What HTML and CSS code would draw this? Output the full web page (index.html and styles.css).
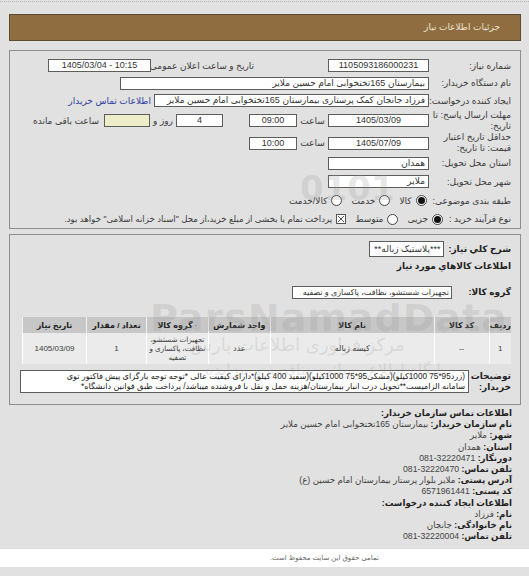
FILE: index.html
```html
<!DOCTYPE html>
<html lang="fa" dir="rtl">
<head>
<meta charset="utf-8">
<title>جزئیات اطلاعات نیاز</title>
<link rel="stylesheet" href="styles.css">
</head>
<body>
<div class="topline"></div>
<div class="page">
  <div class="header">جزئیات اطلاعات نیاز</div>

  <div class="box box1">
    <div class="row r1">
      <div class="lbl">شماره نیاز:</div>
      <div class="inp w101 c">1105093186000231</div>
      <div class="lbl2">تاریخ و ساعت اعلان عمومی:</div>
      <div class="inp w103 c"><span dir="ltr">1405/03/04 - 10:15</span></div>
    </div>
    <div class="row r2">
      <div class="lbl">نام دستگاه خریدار:</div>
      <div class="inp w309">بیمارستان 165تختخوابی امام حسین ملایر</div>
    </div>
    <div class="row r3">
      <div class="lbl">ایجاد کننده درخواست:</div>
      <div class="inp w275">فرزاد جانجان کمک پرستاری بیمارستان 165تختخوابی امام حسین ملایر</div>
      <a class="link" href="#">اطلاعات تماس خریدار</a>
    </div>
    <div class="row r4">
      <div class="lbl two">مهلت ارسال پاسخ: تا<br>تاریخ:</div>
      <div class="inp w101 c">1405/03/09</div>
      <div class="txt saat">ساعت</div>
      <div class="inp w48 c">09:00</div>
      <div class="inp w47 c gap26">4</div>
      <div class="txt rooz">روز و</div>
      <div class="inp w46 yellow"></div>
      <div class="txt baghi">ساعت باقی مانده</div>
    </div>
    <div class="row r5">
      <div class="lbl two">حداقل تاریخ اعتبار<br>قیمت: تا تاریخ:</div>
      <div class="inp w101 c">1405/07/09</div>
      <div class="txt saat">ساعت</div>
      <div class="inp w48 c">10:00</div>
    </div>
    <div class="row r6">
      <div class="lbl">استان محل تحویل:</div>
      <div class="inp w101">همدان</div>
    </div>
    <div class="row r7">
      <div class="lbl">شهر محل تحویل:</div>
      <div class="inp w101">ملایر</div>
    </div>
    <div class="row r8">
      <div class="lbl auto">طبقه بندی موضوعی:</div>
      <span class="radio on"></span><span class="opt">کالا</span>
      <span class="radio"></span><span class="opt">خدمت</span>
      <span class="radio"></span><span class="opt">کالا/خدمت</span>
    </div>
    <div class="row r9">
      <div class="lbl auto">نوع فرآیند خرید :</div>
      <span class="radio on"></span><span class="opt">جزیی</span>
      <span class="radio"></span><span class="opt">متوسط</span>
      <svg class="chk" width="10" height="10" viewBox="0 0 10 10"><rect x="0.5" y="0.5" width="9" height="9" fill="#fff" stroke="#555"/><path d="M2 2 L8 8 M8 2 L2 8" stroke="#555" stroke-width="1"/></svg>
      <span class="opt note">پرداخت تمام یا بخشی از مبلغ خرید،از محل "اسناد خزانه اسلامی" خواهد بود.</span>
    </div>
  </div>

  <div class="box box2">
    <div class="row s1">
      <div class="blbl">شرح کلي نياز:</div>
      <div class="inp sharh">***پلاستیک زباله**</div>
    </div>
    <div class="row s2">
      <div class="blbl">اطلاعات كالاهاي مورد نياز</div>
    </div>
    <div class="row s3">
      <div class="blbl">گروه کالا:</div>
      <div class="inp group">تجهیزات شستشو، نظافت، پاکسازی و تصفیه</div>
    </div>
    <table class="items">
      <thead>
        <tr>
          <th class="col-n">ردیف</th>
          <th class="col-code">کد کالا</th>
          <th class="col-name">نام کالا</th>
          <th class="col-unit">واحد شمارش</th>
          <th class="col-grp"><span class="dot">·</span> گروه کالا</th>
          <th class="col-qty">تعداد / مقدار</th>
          <th class="col-date">تاریخ نیاز</th>
        </tr>
      </thead>
      <tbody>
        <tr>
          <td>1</td>
          <td>--</td>
          <td>کیسه زباله</td>
          <td>عدد</td>
          <td class="grp">تجهیزات شستشو،<br>نظافت، پاکسازی و<br>تصفیه</td>
          <td>1</td>
          <td>1405/03/09</td>
        </tr>
      </tbody>
    </table>
    <div class="row s4">
      <div class="blbl desc-l">توضیحات<br>خریدار:</div>
      <div class="inp desc">(زرد95*75 1000کیلو)(مشکی95*75 1000کیلو)(سفید 400 کیلو)*دارای کیفیت عالی *توجه توجه بارگزای پیش فاکتور توی<br>سامانه الزامیست**تحویل درب انبار بیمارستان/هزینه حمل و نقل با فروشنده میباشد/ پرداخت طبق قوانین دانشگاه*</div>
    </div>
  </div>

  <div class="contact">
    <div><b>اطلاعات تماس سازمان خریدار:</b></div>
    <div><b>نام سازمان خریدار:</b> بیمارستان 165تختخوابی امام حسین ملایر</div>
    <div><b>شهر:</b> ملایر</div>
    <div><b>استان:</b> همدان</div>
    <div><b>دورنگار:</b> 32220471-081</div>
    <div><b>تلفن تماس:</b> 32220470-081</div>
    <div><b>آدرس پستی:</b> ملایر بلوار پرستار بیمارستان امام حسین (ع)</div>
    <div><b>کد پستی:</b> 6571961441</div>
    <div><b>اطلاعات ایجاد کننده درخواست:</b></div>
    <div><b>نام:</b> فرزاد</div>
    <div><b>نام خانوادگی:</b> جانجان</div>
    <div><b>تلفن تماس:</b> 32220004-081</div>
  </div>
</div>
<div class="footer"><span>تمامی حقوق این سایت محفوظ است.</span></div>

<div class="wm wm-digits" dir="ltr">0101</div>
<div class="wm wm-name" dir="ltr">ParsNamadData</div>
<div class="wm wm-fa1">مرکز فراوری اطلاعات پارس</div>
<div class="wm wm-fa2">پایگاه اطلاع رسانی مناقصه و مزایده</div>
</body>
</html>
```

FILE: styles.css
```css
* { box-sizing: border-box; }
html, body { margin: 0; padding: 0; }
body {
  background: #e1e1e1;
  font-family: "Liberation Sans", "DejaVu Sans", sans-serif;
  font-size: 9px;
  color: #3a3a3a;
  width: 529px;
  height: 576px;
  overflow: hidden;
  position: relative;
}
.topline {
  height: 2px;
  border-bottom: 1px dotted #b5b5b5;
}
.page {
  padding: 0 8px 0 9px;
}
.header {
  margin-top: 12px;
  height: 27px;
  background: #8f6d41;
  border: 1px solid #5c4a33;
  color: #eee3d0;
  font-size: 9px;
  line-height: 25px;
  padding-right: 20px;
}
.box {
  border: 1px solid #8e8e8e;
  padding-right: 9px;
}
.box1 {
  margin-top: 9px;
  padding-top: 6px;
  height: 179px;
}
.box2 {
  margin-top: 5px;
  height: 171px;
  padding-top: 5px;
}
.row {
  display: flex;
  align-items: center;
}
.r1 { height: 17px; }
.r2 { height: 18px; }
.r3 { height: 17px; }
.r4 { height: 23px; }
.r5 { height: 22px; }
.r6 { height: 18px; }
.r7 { height: 19px; }
.r8 { height: 19px; }
.r9 { height: 18px; }

.lbl {
  width: 80px;
  margin-left: 2px;
  white-space: nowrap;
  color: #3a3a3a;
}
.lbl.two { line-height: 11px; }
.lbl.auto { width: auto; margin-left: 6px; }
.lbl2 {
  margin-right: 74px;
  width: 100px;
  margin-left: 3px;
  white-space: nowrap;
}
.inp {
  height: 13px;
  background: #fff;
  border: 1px solid #5d5d5d;
  line-height: 11px;
  padding: 0 3px;
  white-space: nowrap;
  overflow: hidden;
  color: #333;
}
.inp.c { text-align: center; }
.w101 { width: 101px; }
.w103 { width: 103px; }
.w309 { width: 309px; }
.w275 { width: 275px; }
.w48 { width: 48px; }
.w47 { width: 47px; }
.w46 { width: 46px; }
.gap26 { margin-right: 26px; }
.yellow { background: #ededc9; }
.txt { white-space: nowrap; }
.saat { width: 31px; text-align: center; }
.rooz { width: 26px; text-align: center; }
.baghi { margin-right: 5px; }
.link {
  margin-right: 3px;
  color: #2b3c9e;
  text-decoration: none;
  white-space: nowrap;
}
.radio {
  width: 11px;
  height: 11px;
  border-radius: 50%;
  border: 1px solid #444;
  background: #fff;
  margin-left: 4px;
  position: relative;
  flex: none;
}
.radio.on::after {
  content: "";
  position: absolute;
  left: 1px; top: 1px;
  width: 7px; height: 7px;
  border-radius: 50%;
  background: #111;
}
.opt { margin-left: 9px; white-space: nowrap; }
.opt.note { font-size: 8.6px; }
.chk { margin-left: 4px; flex: none; }

.blbl {
  font-weight: bold;
  color: #222;
  white-space: nowrap;
}
.s1 { height: 17px; }
.s1 .blbl { margin-left: 4px; }
.sharh { width: 75px; height: 16px; line-height: 14px; }
.s2 { height: 18px; }
.s3 { height: 31px; padding-top: 3px; }
.s3 .blbl { width: 59px; }
.group { width: 160px; font-size: 8px; padding: 0 2px; }

.items {
  margin-top: 11px;
  width: 489px;
  border-collapse: collapse;
  font-size: 8px;
  color: #3d3d3d;
}
.items th {
  background: #c7c7c7;
  height: 16px;
  font-weight: bold;
  color: #222;
  border-left: 1px solid #f2f2f2;
  padding: 0;
}
.items td {
  background: #ebebeb;
  height: 31px;
  text-align: center;
  border-left: 1px solid #fff;
  padding: 0;
  line-height: 9px;
}
.col-n { width: 22px; }
.col-code { width: 55px; }
.col-name { width: 164px; }
.col-unit { width: 62px; }
.col-grp { width: 62px; }
.col-qty { width: 60px; }
.col-date { width: 64px; }
.dot { color: #888; }
.items td.grp { font-size: 7.2px; white-space: nowrap; }

.s4 { margin-top: 6px; align-items: center; }
.desc-l { width: 42px; line-height: 11px; }
.desc {
  width: 449px;
  height: 23px;
  line-height: 10px;
  padding-top: 1px;
  font-size: 8.2px;
  color: #222;
}

.contact {
  padding: 3px 9px 0 0;
  line-height: 11.2px;
  font-size: 8.7px;
  color: #444;
  height: 144px;
}
.contact b { color: #222; }

.footer {
  background: #fff;
  height: 18px;
  margin-top: 0;
  font-size: 7px;
  color: #666;
  line-height: 18px;
  padding-right: 150px;
}

.wm {
  position: absolute;
  pointer-events: none;
  color: rgba(150, 150, 150, 0.22);
  white-space: nowrap;
}
.wm-digits { left: 300px; top: 168px; font-size: 34px; font-weight: bold; font-family: "DejaVu Sans", sans-serif; }
.wm-name { left: 150px; top: 296px; font-size: 38px; font-weight: bold; font-family: "DejaVu Sans", sans-serif; letter-spacing: 1px; }
.wm-fa1 { left: 190px; top: 334px; font-size: 18px; font-family: "DejaVu Sans", sans-serif; }
.wm-fa2 { left: 205px; top: 360px; font-size: 16px; font-family: "DejaVu Sans", sans-serif; }
```
